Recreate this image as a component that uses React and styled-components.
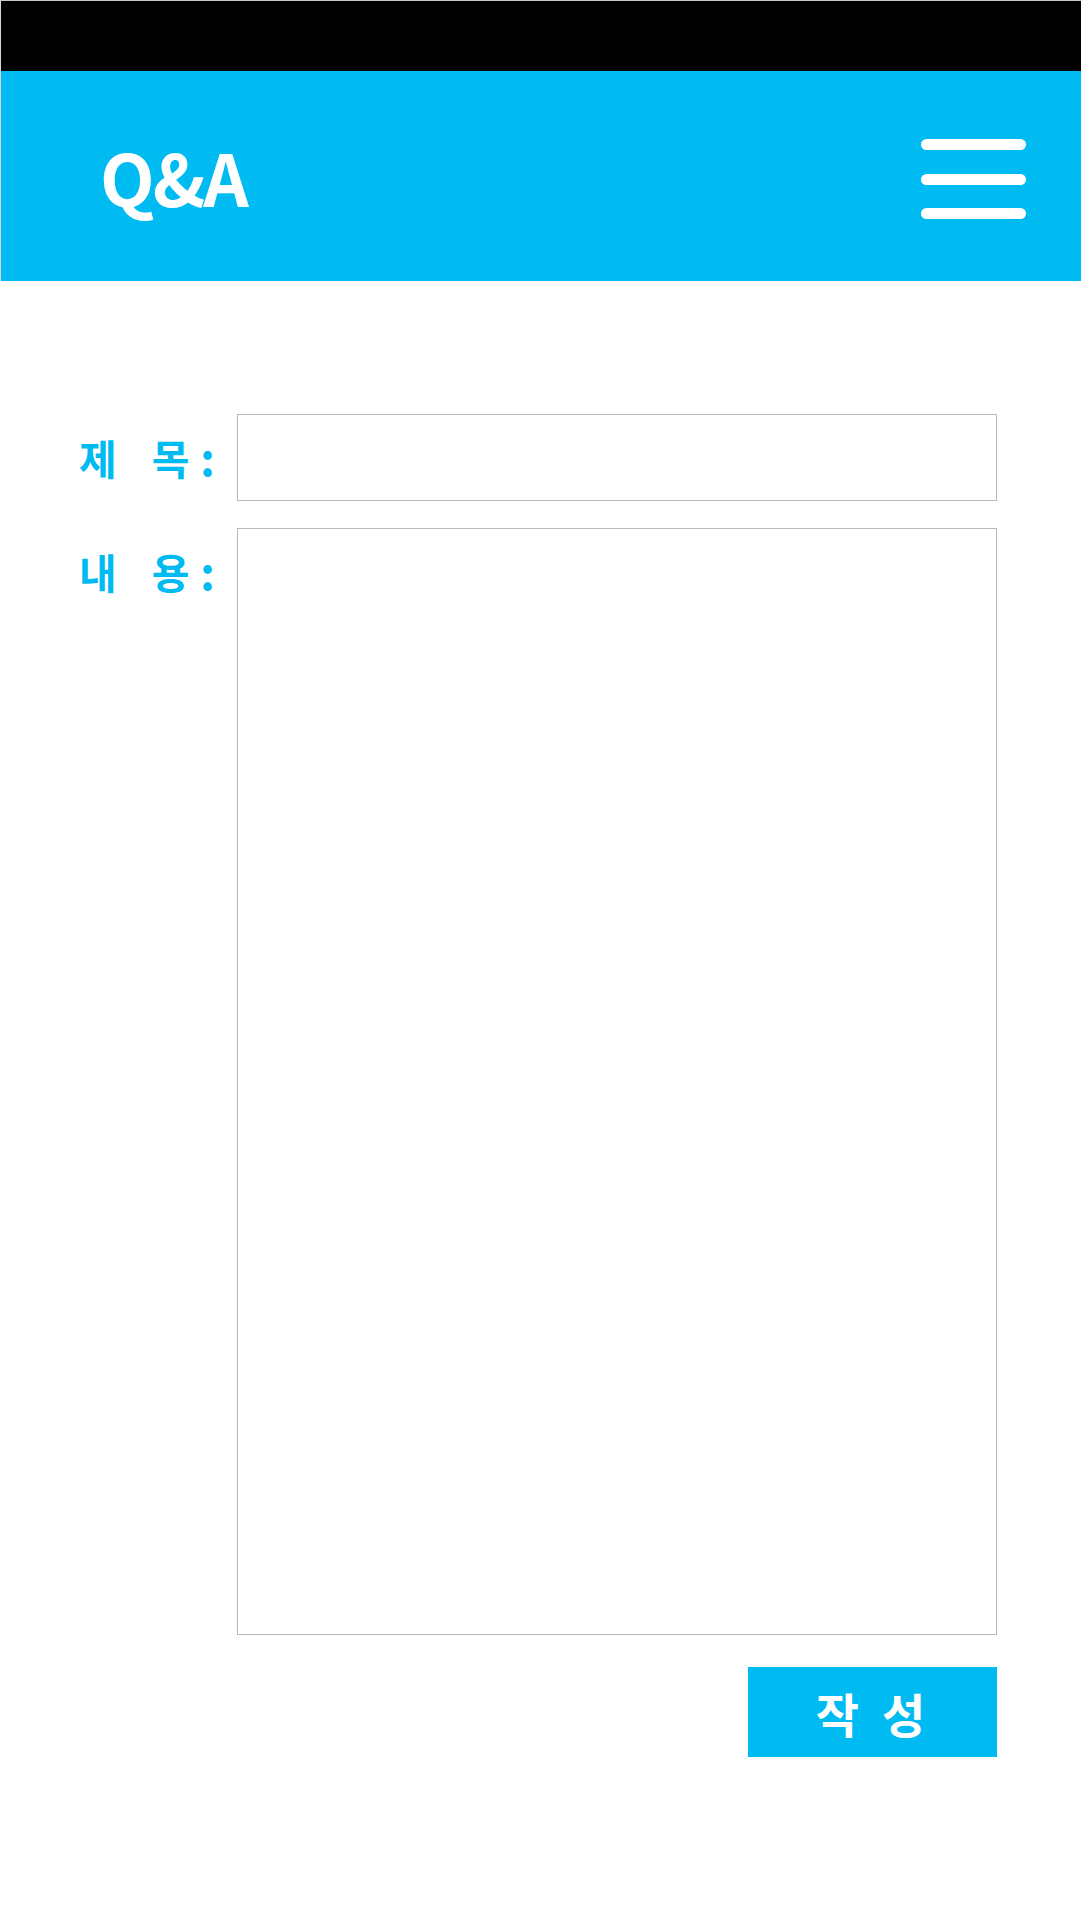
import React from "react";
import styled, { createGlobalStyle } from "styled-components";

const Global = createGlobalStyle`
  html, body { margin: 0; padding: 0; background: #fff; }
  body { font-family: "Noto Sans CJK KR", "Noto Sans", sans-serif; }
  * { box-sizing: border-box; }
`;

const BLUE = "#00baf2";

const Page = styled.div`
  width: 1081px;
  min-height: 1921px;
  background: #fff;
`;

const Top = styled.div`
  border-top: 1px solid #c8c8c8;
  border-left: 1px solid #d8d8d8;
`;

const StatusBar = styled.div`
  height: 70px;
  background: #000;
`;

const Header = styled.header`
  height: 210px;
  background: ${BLUE};
  display: flex;
  align-items: center;
  justify-content: space-between;
  padding: 0 55px 0 99px;
`;

const Title = styled.h1`
  margin: 0;
  color: #fff;
  font-family: "Noto Sans CJK KR", "Noto Sans", sans-serif;
  font-weight: 700;
  font-size: 71px;
  line-height: 1;
  letter-spacing: -2px;
  padding-top: 1px;
`;

const Burger = styled.button`
  display: flex;
  flex-direction: column;
  gap: 23.5px;
  background: none;
  border: 0;
  padding: 0;
  margin-top: 6px;
  cursor: pointer;
`;

const BurgerLine = styled.span`
  display: block;
  width: 105px;
  height: 11px;
  border-radius: 6px;
  background: #fff;
`;

const Main = styled.main`
  padding: 133px 84px 0 79px;
  display: flex;
  flex-direction: column;
`;

const Row = styled.div`
  display: flex;
  align-items: flex-start;
  margin-bottom: ${(p) => p.$gap || 0}px;
`;

const Label = styled.label`
  width: 158px;
  height: 87px;
  padding-right: 22px;
  display: flex;
  align-items: center;
  color: ${BLUE};
  font-weight: 700;
  font-size: 41px;
  line-height: 1;
`;

const Char = styled.span`
  margin-left: ${(p) => p.$ml || 0}px;
`;

const Colon = styled.span`
  margin-left: auto;
  font-size: 46px;
  margin-top: -4px;
`;

const Field = styled.div`
  flex: 1;
  height: ${(p) => p.$h}px;
  border: 1.5px solid #b8b8b8;
  background: #fff;
`;

const Actions = styled.div`
  display: flex;
  justify-content: flex-end;
`;

const Submit = styled.button`
  width: 249px;
  height: 90px;
  border: 0;
  background: ${BLUE};
  color: #fff;
  font-family: "Noto Sans CJK KR", sans-serif;
  font-weight: 700;
  font-size: 47px;
  display: flex;
  align-items: center;
  justify-content: center;
  gap: 23px;
  padding: 0 4px 0 0;
  cursor: pointer;
`;

export default function App() {
  return (
    <>
      <Global />
      <Page>
        <Top>
          <StatusBar />
          <Header>
            <Title>Q&amp;A</Title>
            <Burger aria-label="menu">
              <BurgerLine />
              <BurgerLine />
              <BurgerLine />
            </Burger>
          </Header>
        </Top>
        <Main>
          <Row $gap={27}>
            <Label>
              <Char>제</Char>
              <Char $ml={35}>목</Char>
              <Colon>:</Colon>
            </Label>
            <Field $h={87} />
          </Row>
          <Row $gap={32}>
            <Label>
              <Char>내</Char>
              <Char $ml={35}>용</Char>
              <Colon>:</Colon>
            </Label>
            <Field $h={1107} />
          </Row>
          <Actions>
            <Submit>
              <span>작</span>
              <span>성</span>
            </Submit>
          </Actions>
        </Main>
      </Page>
    </>
  );
}
